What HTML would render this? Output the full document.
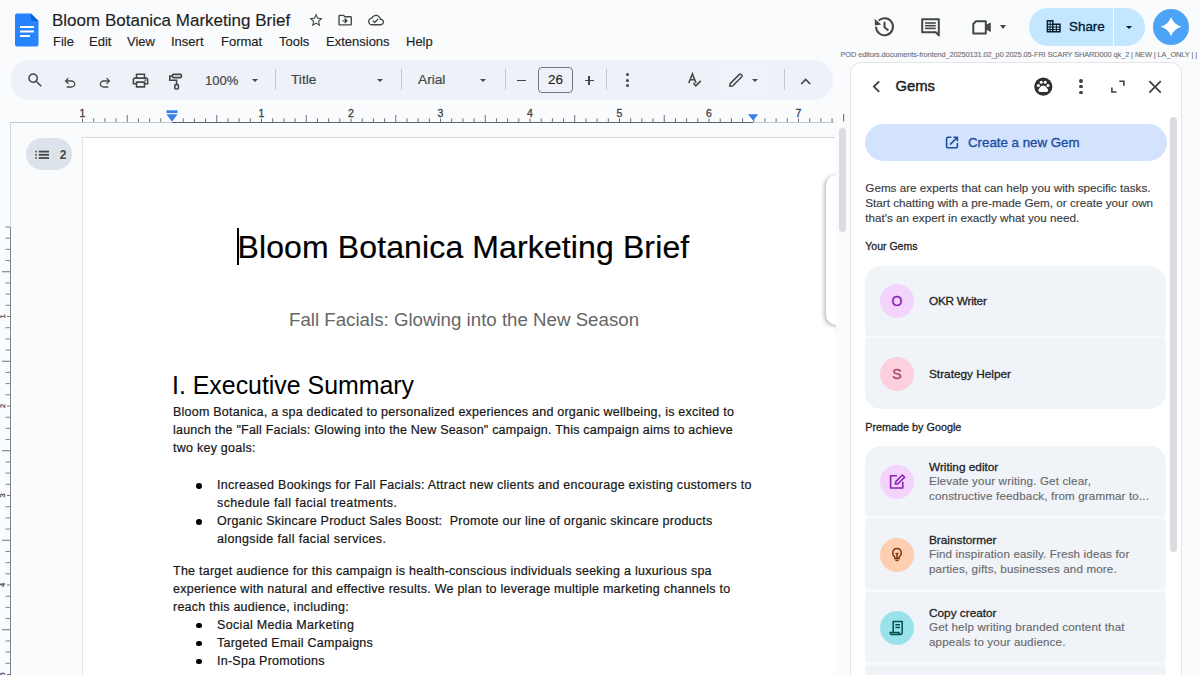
<!DOCTYPE html>
<html><head><meta charset="utf-8">
<style>
*{margin:0;padding:0;box-sizing:border-box}
html,body{width:1200px;height:675px;overflow:hidden;background:#f9fbfd;font-family:"Liberation Sans",sans-serif;color:#1f1f1f;position:relative}
.a{position:absolute;white-space:nowrap}
svg{position:absolute;overflow:visible}
#toolbar{position:absolute;left:10px;top:60px;width:823px;height:40px;border-radius:20px;background:#eef2f8}
.sep{position:absolute;width:1px;height:21px;top:69px;background:#c7c7c7}
.tri{position:absolute;width:0;height:0;border-left:4px solid transparent;border-right:4px solid transparent;border-top:4px solid #444746}
#page{position:absolute;left:82px;top:137px;width:753px;height:600px;background:#fff;border-left:1px solid #e3e3e3;border-top:1px solid #d9d9d9}
.body{font-size:12.5px;letter-spacing:0.25px;color:#161616;-webkit-text-stroke:0.2px #161616}
.bl{position:absolute;left:23px;width:5.8px;height:5.8px;border-radius:50%;background:#000}
#panel{position:absolute;left:849.5px;top:62px;width:332.5px;height:640px;background:#fff;border:1px solid #e3e5e8;border-radius:11px}
.card{position:absolute;left:865px;width:301px;background:#f0f3f8}
.av{position:absolute;left:880px;width:34px;height:34px;border-radius:50%;text-align:center;line-height:34px;font-size:14px;-webkit-text-stroke:0.35px currentColor}
.gt{position:absolute;left:929px;font-size:11.8px;color:#1f1f1f;white-space:nowrap;-webkit-text-stroke:0.3px #1f1f1f !important}
.gd{position:absolute;left:929px;font-size:11.6px;color:#686a6d;white-space:nowrap;line-height:15px;letter-spacing:0.15px;-webkit-text-stroke:0.15px #686a6d}
</style></head><body>

<!-- Docs logo -->
<svg style="left:15px;top:13px" width="24" height="34" viewBox="0 0 24 34">
  <path d="M2 0.5 H16 L23.5 8 V31.5 a2 2 0 0 1 -2 2 H2 a2 2 0 0 1 -2 -2 V2.5 a2 2 0 0 1 2 -2 Z" fill="#2684fc"/>
  <path d="M16 0.5 L23.5 8 H18 a2 2 0 0 1 -2 -2 Z" fill="#0066da"/>
  <rect x="5" y="13" width="14" height="2" fill="#fff"/>
  <rect x="5" y="17.5" width="14" height="2" fill="#fff"/>
  <rect x="5" y="22" width="10" height="2" fill="#fff"/>
</svg>

<div class="a" style="left:52px;top:11px;font-size:17px;color:#1f1f1f;-webkit-text-stroke:0.15px #1f1f1f">Bloom Botanica Marketing Brief</div>
<svg style="left:307.6px;top:12.2px" width="16.2" height="16.2" viewBox="0 0 24 24"><path fill="#444746" d="M22 9.24l-7.19-.62L12 2 9.19 8.63 2 9.24l5.46 4.73L5.82 21 12 17.27 18.18 21l-1.63-7.03L22 9.24zM12 15.4l-3.76 2.27 1-4.28-3.32-2.88 4.38-.38L12 6.1l1.71 4.04 4.38.38-3.32 2.88 1 4.28L12 15.4z"/></svg>
<svg style="left:337.2px;top:12.4px" width="16.3" height="16.3" viewBox="0 0 24 24"><path fill="#444746" d="M20 6h-8l-2-2H4c-1.1 0-1.99.9-1.99 2L2 18c0 1.1.9 2 2 2h16c1.1 0 2-.9 2-2V8c0-1.1-.9-2-2-2zm0 12H4V6h5.17l2 2H20v10zm-7.84-6H8v2h4.16l-1.59 1.59L11.99 17 16 13.01 11.99 9l-1.41 1.41L12.16 12z"/></svg>
<svg style="left:367.9px;top:12.4px" width="16.1" height="16.1" viewBox="0 0 24 24"><path fill="#444746" d="M19.35 10.04C18.670 6.59 15.64 4 12 4 9.11 4 6.6 5.64 5.35 8.04 2.34 8.36 0 10.91 0 14c0 3.31 2.69 6 6 6h13c2.76 0 5-2.24 5-5 0-2.64-2.05-4.78-4.650-4.96zM19 18H6c-2.21 0-4-1.79-4-4 0-2.05 1.53-3.76 3.56-3.97l1.07-.11.5-.95C8.08 7.14 9.94 6 12 6c2.62 0 4.88 1.86 5.39 4.43l.3 1.5 1.53.11c1.56.1 2.78 1.410 2.78 2.96 0 1.65-1.35 3-3 3zm-9-3.82l-2.09-2.09L6.5 13.5 10 17l6.01-6.01-1.41-1.41z"/></svg>

<div class="a" style="left:53px;top:34px;font-size:13px;color:#1f1f1f;-webkit-text-stroke:0.15px #1f1f1f">File</div>
<div class="a" style="left:89px;top:34px;font-size:13px;color:#1f1f1f;-webkit-text-stroke:0.15px #1f1f1f">Edit</div>
<div class="a" style="left:127px;top:34px;font-size:13px;color:#1f1f1f;-webkit-text-stroke:0.15px #1f1f1f">View</div>
<div class="a" style="left:171px;top:34px;font-size:13px;color:#1f1f1f;-webkit-text-stroke:0.15px #1f1f1f">Insert</div>
<div class="a" style="left:221px;top:34px;font-size:13px;color:#1f1f1f;-webkit-text-stroke:0.15px #1f1f1f">Format</div>
<div class="a" style="left:279px;top:34px;font-size:13px;color:#1f1f1f;-webkit-text-stroke:0.15px #1f1f1f">Tools</div>
<div class="a" style="left:326px;top:34px;font-size:13px;color:#1f1f1f;-webkit-text-stroke:0.15px #1f1f1f">Extensions</div>
<div class="a" style="left:406px;top:34px;font-size:13px;color:#1f1f1f;-webkit-text-stroke:0.15px #1f1f1f">Help</div>


<!-- header right -->
<svg style="left:870px;top:12px" width="30" height="30" viewBox="870 12 30 30"><g fill="none" stroke="#444746" stroke-width="2"><path d="M876 26.8 A8.5 8.5 0 1 0 878.6 20.6"/><path d="M884.5 21.8 V27.2 L888.4 30.4"/></g><path d="M874.6 18.8 L875 25.4 L881.2 24.6 Z" fill="#444746"/></svg>
<svg style="left:916px;top:12px" width="30" height="30" viewBox="916 12 30 30"><g fill="none" stroke="#444746" stroke-width="2" stroke-linejoin="round"><path d="M922.2 19.2 H938.8 V35.4 L935.8 32.2 H922.2 Z"/></g><g fill="#444746"><rect x="925" y="22.2" width="10.8" height="1.6"/><rect x="925" y="24.9" width="10.8" height="1.6"/><rect x="925" y="27.6" width="10.8" height="1.6"/></g></svg>
<svg style="left:968px;top:14px" width="28" height="26" viewBox="968 14 28 26"><g fill="none" stroke="#444746" stroke-width="2" stroke-linejoin="round"><path d="M976 21.2 H985.8 V33.4 H973.3 V24 Z"/></g><path d="M986 24.8 L990.8 22.4 V32 L986 29.6 Z" fill="#444746"/></svg>
<div class="tri" style="left:1000px;top:25px;border-left-width:3.6px;border-right-width:3.6px;border-top-width:4px"></div>

<div class="a" style="left:1029px;top:8px;width:115.5px;height:38px;border-radius:19px;background:#c2e7ff"></div>
<div class="a" style="left:1113.2px;top:8px;width:1px;height:38px;background:#f9fbfd"></div>
<svg style="left:1044px;top:17px" width="20" height="18" viewBox="1044 17 20 18"><g fill="none" stroke="#0a1f33" stroke-width="1.5"><path d="M1047.4 31.7 V20.7 H1052.8 V31.7 Z"/><path d="M1052.8 24.3 H1060 V31.7 H1052.8"/><path d="M1047.4 24.3 H1052.8 M1047.4 27.1 H1060 M1047.4 29.6 H1060 M1050.1 20.7 V31.7 M1056.4 24.3 V31.7" stroke-width="1"/></g></svg>
<div class="a" style="left:1069px;top:19px;font-size:13.4px;color:#001d35;-webkit-text-stroke:0.35px #001d35">Share</div>
<div class="tri" style="left:1125.7px;top:25.8px;border-left-width:3.7px;border-right-width:3.7px;border-top-width:3.6px;border-top-color:#001d35"></div>
<div class="a" style="left:1152.9px;top:8.5px;width:36.5px;height:36.5px;border-radius:50%;background:#4ca4f8"></div>
<svg style="left:1158px;top:15px" width="26" height="24" viewBox="1158 15 26 24"><path fill="#fff" d="M1171.1 17.1 Q1173.4 24.4 1181.3 26.7 Q1173.4 29 1171.1 36.3 Q1168.8 29 1160.9 26.7 Q1168.8 24.4 1171.1 17.1 Z"/></svg>

<!-- toolbar -->
<div id="toolbar"></div>
<svg style="left:26px;top:71px" width="18" height="18" viewBox="0 -960 960 960"><path fill="#444746" d="M784-120 532-372q-30 24-69 38t-83 14q-109 0-184.5-75.5T120-580q0-109 75.5-184.5T380-840q109 0 184.5 75.5T640-580q0 44-14 83t-38 69l252 252-56 56ZM380-400q75 0 127.5-52.5T560-580q0-75-52.5-127.5T380-760q-75 0-127.5 52.5T200-580q0 75 52.5 127.5T380-400Z"/></svg>
<svg style="left:61.5px;top:74.5px" width="16" height="16" viewBox="0 -960 960 960"><path fill="#444746" d="M280-200v-80h284q63 0 109.5-40T720-420q0-60-46.5-100T564-560H312l104 104-56 56-200-200 200-200 56 56-104 104h252q97 0 166.5 63T800-420q0 94-69.5 157T564-200H280Z"/></svg>
<svg style="left:97px;top:74.5px" width="16" height="16" viewBox="0 -960 960 960"><path fill="#444746" d="M396-200q-97 0-166.5-63T160-420q0-94 69.5-157T396-640h252L544-744l56-56 200 200-200 200-56-56 104-104H396q-63 0-109.5 40T240-420q0 60 46.5 100T396-280h284v80H396Z"/></svg>
<svg style="left:131px;top:71px" width="19" height="19" viewBox="0 -960 960 960"><path fill="#444746" d="M640-640v-120H320v120h-80v-200h480v200h-80Zm-480 80h640-640Zm560 100q17 0 28.5-11.5T760-500q0-17-11.5-28.5T720-540q-17 0-28.5 11.5T680-500q0 17 11.5 28.5T720-460Zm-80 260v-160H320v160h320Zm80 80H240v-160H80v-240q0-51 35-85.5t85-34.5h560q51 0 85.5 34.5T880-520v240H720v160Zm80-240v-160q0-17-11.5-28.5T760-560H200q-17 0-28.5 11.5T160-520v160h80v-80h480v80h80Z"/></svg>
<svg style="left:160px;top:70px" width="30" height="22" viewBox="160 70 30 22"><g fill="none" stroke="#444746" stroke-width="1.6"><rect x="172.4" y="74.4" width="9" height="3.2" rx="1"/><path d="M172.4 76 H169.8 V80.2 H176.6 V84.2"/><rect x="174.8" y="84.6" width="3.6" height="4.4" rx="1"/></g></svg>
<div class="a" style="left:205px;top:73px;font-size:13px;color:#444746;-webkit-text-stroke:0.2px #444746">100%</div>
<div class="tri" style="left:251.5px;top:78.5px;border-left-width:3.7px;border-right-width:3.7px;border-top-width:3.8px"></div>
<div class="sep" style="left:275px"></div>
<div class="a" style="left:291px;top:72px;font-size:13.7px;color:#444746;-webkit-text-stroke:0.2px #444746">Title</div>
<div class="tri" style="left:376.5px;top:78.5px;border-left-width:3.7px;border-right-width:3.7px;border-top-width:3.8px"></div>
<div class="sep" style="left:401px"></div>
<div class="a" style="left:418px;top:72px;font-size:13.7px;color:#444746;-webkit-text-stroke:0.2px #444746">Arial</div>
<div class="tri" style="left:480px;top:78.5px;border-left-width:3.7px;border-right-width:3.7px;border-top-width:3.8px"></div>
<div class="sep" style="left:505px"></div>
<div class="a" style="left:517px;top:79.5px;width:9px;height:1.6px;background:#444746"></div>
<div class="a" style="left:538px;top:67px;width:35px;height:25.5px;border:1px solid #747775;border-radius:4px;font-size:13.5px;color:#1f1f1f;text-align:center;line-height:23px;-webkit-text-stroke:0.15px #1f1f1f">26</div>
<div class="a" style="left:584.5px;top:79.7px;width:9px;height:1.6px;background:#444746"></div>
<div class="a" style="left:588.2px;top:76px;width:1.6px;height:9px;background:#444746"></div>
<div class="sep" style="left:606px"></div>
<div class="a" style="left:626px;top:73px;width:3px;height:3px;border-radius:50%;background:#444746"></div>
<div class="a" style="left:626px;top:78.5px;width:3px;height:3px;border-radius:50%;background:#444746"></div>
<div class="a" style="left:626px;top:84px;width:3px;height:3px;border-radius:50%;background:#444746"></div>
<svg style="left:680px;top:70px" width="30" height="22" viewBox="680 70 30 22"><g fill="none" stroke="#444746" stroke-width="1.6"><path d="M688.8 83 L692.4 73.9 L696 83 M690 79.8 H694.8"/><path d="M693.3 83 L695.8 85.9 L700.8 80.9"/></g></svg>
<div class="a" style="left:720px;top:60px;width:48px;height:40px;background:#f0f2fa"></div>
<svg style="left:726px;top:70px" width="20" height="20" viewBox="726 70 20 20"><g fill="none" stroke="#444746" stroke-width="1.5" stroke-linejoin="round"><path d="M729.7 86.2 L730.2 83.6 L739.4 74.4 Q740.2 73.6 741 74.4 L741.8 75.2 Q742.6 76 741.8 76.8 L732.6 86 Z"/></g></svg>
<div class="tri" style="left:751.5px;top:78.5px;border-left-width:3.7px;border-right-width:3.7px;border-top-width:3.8px"></div>
<div class="sep" style="left:784px"></div>
<svg style="left:798px;top:74px" width="16" height="12" viewBox="798 74 16 12"><path d="M801.2 84 L805.7 79.5 L810.2 84" fill="none" stroke="#444746" stroke-width="1.7"/></svg>


<!-- ruler -->
<svg style="left:0;top:100px" width="860" height="26" viewBox="0 100 860 26">
<rect x="10" y="122" width="824" height="1" fill="#c7cacc"/>
<rect x="172" y="122" width="581" height="1" fill="#5f6368"/>
<rect x="82.00" y="118.5" width="1" height="3.5" fill="#6f7377"/>
<text x="82.50" y="116.5" font-size="10.5" fill="#3c4043" stroke="#3c4043" stroke-width="0.3" text-anchor="middle" font-family="Liberation Sans">1</text>
<rect x="93.19" y="118.3" width="1" height="3.7" fill="#6f7377"/>
<rect x="104.38" y="118.3" width="1" height="3.7" fill="#6f7377"/>
<rect x="115.56" y="118.3" width="1" height="3.7" fill="#6f7377"/>
<rect x="126.75" y="115" width="1" height="7" fill="#6f7377"/>
<rect x="137.94" y="118.3" width="1" height="3.7" fill="#6f7377"/>
<rect x="149.12" y="118.3" width="1" height="3.7" fill="#6f7377"/>
<rect x="160.31" y="118.3" width="1" height="3.7" fill="#6f7377"/>
<rect x="182.69" y="118.3" width="1" height="3.7" fill="#6f7377"/>
<rect x="193.88" y="118.3" width="1" height="3.7" fill="#6f7377"/>
<rect x="205.06" y="118.3" width="1" height="3.7" fill="#6f7377"/>
<rect x="216.25" y="115" width="1" height="7" fill="#6f7377"/>
<rect x="227.44" y="118.3" width="1" height="3.7" fill="#6f7377"/>
<rect x="238.62" y="118.3" width="1" height="3.7" fill="#6f7377"/>
<rect x="249.81" y="118.3" width="1" height="3.7" fill="#6f7377"/>
<rect x="261.00" y="118.5" width="1" height="3.5" fill="#6f7377"/>
<text x="261.50" y="116.5" font-size="10.5" fill="#3c4043" stroke="#3c4043" stroke-width="0.3" text-anchor="middle" font-family="Liberation Sans">1</text>
<rect x="272.19" y="118.3" width="1" height="3.7" fill="#6f7377"/>
<rect x="283.38" y="118.3" width="1" height="3.7" fill="#6f7377"/>
<rect x="294.56" y="118.3" width="1" height="3.7" fill="#6f7377"/>
<rect x="305.75" y="115" width="1" height="7" fill="#6f7377"/>
<rect x="316.94" y="118.3" width="1" height="3.7" fill="#6f7377"/>
<rect x="328.12" y="118.3" width="1" height="3.7" fill="#6f7377"/>
<rect x="339.31" y="118.3" width="1" height="3.7" fill="#6f7377"/>
<rect x="350.50" y="118.5" width="1" height="3.5" fill="#6f7377"/>
<text x="351.00" y="116.5" font-size="10.5" fill="#3c4043" stroke="#3c4043" stroke-width="0.3" text-anchor="middle" font-family="Liberation Sans">2</text>
<rect x="361.69" y="118.3" width="1" height="3.7" fill="#6f7377"/>
<rect x="372.88" y="118.3" width="1" height="3.7" fill="#6f7377"/>
<rect x="384.06" y="118.3" width="1" height="3.7" fill="#6f7377"/>
<rect x="395.25" y="115" width="1" height="7" fill="#6f7377"/>
<rect x="406.44" y="118.3" width="1" height="3.7" fill="#6f7377"/>
<rect x="417.62" y="118.3" width="1" height="3.7" fill="#6f7377"/>
<rect x="428.81" y="118.3" width="1" height="3.7" fill="#6f7377"/>
<rect x="440.00" y="118.5" width="1" height="3.5" fill="#6f7377"/>
<text x="440.50" y="116.5" font-size="10.5" fill="#3c4043" stroke="#3c4043" stroke-width="0.3" text-anchor="middle" font-family="Liberation Sans">3</text>
<rect x="451.19" y="118.3" width="1" height="3.7" fill="#6f7377"/>
<rect x="462.38" y="118.3" width="1" height="3.7" fill="#6f7377"/>
<rect x="473.56" y="118.3" width="1" height="3.7" fill="#6f7377"/>
<rect x="484.75" y="115" width="1" height="7" fill="#6f7377"/>
<rect x="495.94" y="118.3" width="1" height="3.7" fill="#6f7377"/>
<rect x="507.12" y="118.3" width="1" height="3.7" fill="#6f7377"/>
<rect x="518.31" y="118.3" width="1" height="3.7" fill="#6f7377"/>
<rect x="529.50" y="118.5" width="1" height="3.5" fill="#6f7377"/>
<text x="530.00" y="116.5" font-size="10.5" fill="#3c4043" stroke="#3c4043" stroke-width="0.3" text-anchor="middle" font-family="Liberation Sans">4</text>
<rect x="540.69" y="118.3" width="1" height="3.7" fill="#6f7377"/>
<rect x="551.88" y="118.3" width="1" height="3.7" fill="#6f7377"/>
<rect x="563.06" y="118.3" width="1" height="3.7" fill="#6f7377"/>
<rect x="574.25" y="115" width="1" height="7" fill="#6f7377"/>
<rect x="585.44" y="118.3" width="1" height="3.7" fill="#6f7377"/>
<rect x="596.62" y="118.3" width="1" height="3.7" fill="#6f7377"/>
<rect x="607.81" y="118.3" width="1" height="3.7" fill="#6f7377"/>
<rect x="619.00" y="118.5" width="1" height="3.5" fill="#6f7377"/>
<text x="619.50" y="116.5" font-size="10.5" fill="#3c4043" stroke="#3c4043" stroke-width="0.3" text-anchor="middle" font-family="Liberation Sans">5</text>
<rect x="630.19" y="118.3" width="1" height="3.7" fill="#6f7377"/>
<rect x="641.38" y="118.3" width="1" height="3.7" fill="#6f7377"/>
<rect x="652.56" y="118.3" width="1" height="3.7" fill="#6f7377"/>
<rect x="663.75" y="115" width="1" height="7" fill="#6f7377"/>
<rect x="674.94" y="118.3" width="1" height="3.7" fill="#6f7377"/>
<rect x="686.12" y="118.3" width="1" height="3.7" fill="#6f7377"/>
<rect x="697.31" y="118.3" width="1" height="3.7" fill="#6f7377"/>
<rect x="708.50" y="118.5" width="1" height="3.5" fill="#6f7377"/>
<text x="709.00" y="116.5" font-size="10.5" fill="#3c4043" stroke="#3c4043" stroke-width="0.3" text-anchor="middle" font-family="Liberation Sans">6</text>
<rect x="719.69" y="118.3" width="1" height="3.7" fill="#6f7377"/>
<rect x="730.88" y="118.3" width="1" height="3.7" fill="#6f7377"/>
<rect x="742.06" y="118.3" width="1" height="3.7" fill="#6f7377"/>
<rect x="753.25" y="115" width="1" height="7" fill="#6f7377"/>
<rect x="764.44" y="118.3" width="1" height="3.7" fill="#6f7377"/>
<rect x="775.62" y="118.3" width="1" height="3.7" fill="#6f7377"/>
<rect x="786.81" y="118.3" width="1" height="3.7" fill="#6f7377"/>
<rect x="798.00" y="118.5" width="1" height="3.5" fill="#6f7377"/>
<text x="798.50" y="116.5" font-size="10.5" fill="#3c4043" stroke="#3c4043" stroke-width="0.3" text-anchor="middle" font-family="Liberation Sans">7</text>
<rect x="809.19" y="118.3" width="1" height="3.7" fill="#6f7377"/>
<rect x="820.38" y="118.3" width="1" height="3.7" fill="#6f7377"/>
<rect x="831.56" y="118.3" width="1" height="3.7" fill="#6f7377"/>
<rect x="843" y="114" width="1.2" height="7.5" fill="#747775"/>
<rect x="166.5" y="110.3" width="11" height="2.8" fill="#3a7fe9"/>
<path d="M166.5 114.2 H177.5 L172 121.8 Z" fill="#3a7fe9"/>
<path d="M748 114.2 H758.2 L753.1 120.5 Z" fill="#3a7fe9"/>
</svg>
<svg style="left:0;top:122px" width="12" height="553" viewBox="0 122 12 553">
<rect x="10" y="122" width="1" height="105" fill="#d5d8db"/>
<rect x="10" y="227" width="1" height="460" fill="#80868b"/>
<rect x="5.5" y="226.50" width="4.5" height="1" fill="#80868b"/>
<rect x="5.5" y="237.69" width="4.5" height="1" fill="#80868b"/>
<rect x="5.5" y="248.88" width="4.5" height="1" fill="#80868b"/>
<rect x="5.5" y="260.06" width="4.5" height="1" fill="#80868b"/>
<rect x="2" y="271.25" width="8" height="1" fill="#6f7377"/>
<rect x="5.5" y="282.44" width="4.5" height="1" fill="#80868b"/>
<rect x="5.5" y="293.62" width="4.5" height="1" fill="#80868b"/>
<rect x="5.5" y="304.81" width="4.5" height="1" fill="#80868b"/>
<rect x="7" y="316.00" width="3" height="1" fill="#6f7377"/>
<text transform="translate(2.2 316.50) rotate(-90)" font-size="7.5" fill="#3c4043" stroke="#3c4043" stroke-width="0.2" text-anchor="middle" font-family="Liberation Sans" y="2.6">1</text>
<rect x="5.5" y="327.19" width="4.5" height="1" fill="#80868b"/>
<rect x="5.5" y="338.38" width="4.5" height="1" fill="#80868b"/>
<rect x="5.5" y="349.56" width="4.5" height="1" fill="#80868b"/>
<rect x="2" y="360.75" width="8" height="1" fill="#6f7377"/>
<rect x="5.5" y="371.94" width="4.5" height="1" fill="#80868b"/>
<rect x="5.5" y="383.12" width="4.5" height="1" fill="#80868b"/>
<rect x="5.5" y="394.31" width="4.5" height="1" fill="#80868b"/>
<rect x="7" y="405.50" width="3" height="1" fill="#6f7377"/>
<text transform="translate(2.2 406.00) rotate(-90)" font-size="7.5" fill="#3c4043" stroke="#3c4043" stroke-width="0.2" text-anchor="middle" font-family="Liberation Sans" y="2.6">2</text>
<rect x="5.5" y="416.69" width="4.5" height="1" fill="#80868b"/>
<rect x="5.5" y="427.88" width="4.5" height="1" fill="#80868b"/>
<rect x="5.5" y="439.06" width="4.5" height="1" fill="#80868b"/>
<rect x="2" y="450.25" width="8" height="1" fill="#6f7377"/>
<rect x="5.5" y="461.44" width="4.5" height="1" fill="#80868b"/>
<rect x="5.5" y="472.62" width="4.5" height="1" fill="#80868b"/>
<rect x="5.5" y="483.81" width="4.5" height="1" fill="#80868b"/>
<rect x="7" y="495.00" width="3" height="1" fill="#6f7377"/>
<text transform="translate(2.2 495.50) rotate(-90)" font-size="7.5" fill="#3c4043" stroke="#3c4043" stroke-width="0.2" text-anchor="middle" font-family="Liberation Sans" y="2.6">3</text>
<rect x="5.5" y="506.19" width="4.5" height="1" fill="#80868b"/>
<rect x="5.5" y="517.38" width="4.5" height="1" fill="#80868b"/>
<rect x="5.5" y="528.56" width="4.5" height="1" fill="#80868b"/>
<rect x="2" y="539.75" width="8" height="1" fill="#6f7377"/>
<rect x="5.5" y="550.94" width="4.5" height="1" fill="#80868b"/>
<rect x="5.5" y="562.12" width="4.5" height="1" fill="#80868b"/>
<rect x="5.5" y="573.31" width="4.5" height="1" fill="#80868b"/>
<rect x="7" y="584.50" width="3" height="1" fill="#6f7377"/>
<text transform="translate(2.2 585.00) rotate(-90)" font-size="7.5" fill="#3c4043" stroke="#3c4043" stroke-width="0.2" text-anchor="middle" font-family="Liberation Sans" y="2.6">4</text>
<rect x="5.5" y="595.69" width="4.5" height="1" fill="#80868b"/>
<rect x="5.5" y="606.88" width="4.5" height="1" fill="#80868b"/>
<rect x="5.5" y="618.06" width="4.5" height="1" fill="#80868b"/>
<rect x="2" y="629.25" width="8" height="1" fill="#6f7377"/>
<rect x="5.5" y="640.44" width="4.5" height="1" fill="#80868b"/>
<rect x="5.5" y="651.62" width="4.5" height="1" fill="#80868b"/>
<rect x="5.5" y="662.81" width="4.5" height="1" fill="#80868b"/>
<rect x="7" y="674.00" width="3" height="1" fill="#6f7377"/>
<text transform="translate(2.2 674.50) rotate(-90)" font-size="7.5" fill="#3c4043" stroke="#3c4043" stroke-width="0.2" text-anchor="middle" font-family="Liberation Sans" y="2.6">5</text>
</svg>


<!-- page -->
<div id="page"></div>


<!-- doc content -->
<div class="a" style="left:237px;top:227.5px;width:1.5px;height:37px;background:#000"></div>
<div class="a" style="left:237.5px;top:229px;font-size:32px;letter-spacing:0.12px;color:#000;-webkit-text-stroke:0.2px #000">Bloom Botanica Marketing Brief</div>
<div class="a" style="left:289px;top:308.5px;font-size:18.7px;color:#666">Fall Facials: Glowing into the New Season</div>
<div class="a" style="left:172px;top:370.7px;font-size:24.9px;color:#000">I. Executive Summary</div>
<div class="a body" style="left:173px;top:403px;line-height:18px"><span style="letter-spacing:0.228px">Bloom Botanica, a spa dedicated to personalized experiences and organic wellbeing, is excited to</span><br><span style="letter-spacing:0.209px">launch the "Fall Facials: Glowing into the New Season" campaign. This campaign aims to achieve</span><br>two key goals:</div>
<div class="a body" style="left:173px;top:476px;line-height:18px">
<div class="bl" style="top:6.8px"></div><div style="position:absolute;left:44px;top:0"><span style="letter-spacing:0.268px">Increased Bookings for Fall Facials: Attract new clients and encourage existing customers to</span></div>
<div style="position:absolute;left:44px;top:18px"><span style="letter-spacing:0.38px">schedule fall facial treatments.</span></div>
<div class="bl" style="top:42.8px"></div><div style="position:absolute;left:44px;top:36px">Organic Skincare Product Sales Boost:&nbsp; Promote our line of organic skincare products</div>
<div style="position:absolute;left:44px;top:54px"><span style="letter-spacing:0.35px">alongside fall facial services.</span></div>
</div>
<div class="a body" style="left:173px;top:562px;line-height:18px">The target audience for this campaign is health-conscious individuals seeking a luxurious spa<br>experience with natural and effective results. We plan to leverage multiple marketing channels to<br>reach this audience, including:</div>
<div class="a body" style="left:173px;top:615.8px;line-height:18px">
<div class="bl" style="top:6.8px"></div><div style="position:absolute;left:44px;top:0"><span style="letter-spacing:0.33px">Social Media Marketing</span></div>
<div class="bl" style="top:24.8px"></div><div style="position:absolute;left:44px;top:18px">Targeted Email Campaigns</div>
<div class="bl" style="top:42.8px"></div><div style="position:absolute;left:44px;top:36px">In-Spa Promotions</div>
</div>


<!-- outline pill -->
<div class="a" style="left:25.5px;top:138px;width:46px;height:32px;border-radius:16px;background:#dde3ea"></div>
<svg style="left:30px;top:145px" width="40" height="20" viewBox="30 145 40 20"><g fill="#444746"><rect x="35.3" y="150.8" width="1.6" height="1.6"/><rect x="35.3" y="154" width="1.6" height="1.6"/><rect x="35.3" y="157.2" width="1.6" height="1.6"/><rect x="38.8" y="150.7" width="10.2" height="1.8"/><rect x="38.8" y="153.9" width="10.2" height="1.8"/><rect x="38.8" y="157.1" width="10.2" height="1.8"/></g></svg>
<div class="a" style="left:59.8px;top:147.8px;font-size:12px;font-weight:bold;color:#444746">2</div>
<!-- side scroller element -->
<div class="a" style="left:826px;top:175px;width:20px;height:150px;border-radius:10px 0 0 10px;background:#fff;box-shadow:-1.5px 1px 4px rgba(0,0,0,0.3)"></div>
<div class="a" style="left:836px;top:124px;width:14px;height:560px;background:#f9fbfd"></div>
<div class="a" style="left:838.5px;top:127.5px;width:7px;height:104px;border-radius:3.5px;background:#dadce0"></div>

<!-- panel -->
<div id="panel"></div>
<div class="a" style="left:840.5px;top:50px;font-size:7.4px;color:#6b6e72;letter-spacing:-0.1px;-webkit-text-stroke:0.1px #6b6e72">POD editors.documents-frontend_20250131.02_p0 2025.05-FRI SCARY SHARD000 qk_2 | NEW | LA_ONLY | |</div>
<svg style="left:868px;top:78px" width="16" height="18" viewBox="868 78 16 18"><path d="M879.2 81.3 L873.9 86.6 L879.2 91.9" fill="none" stroke="#3c4043" stroke-width="1.9"/></svg>
<div class="a" style="left:895.5px;top:78.4px;font-size:14.8px;color:#1f1f1f;-webkit-text-stroke:0.45px #1f1f1f">Gems</div>
<svg style="left:1030px;top:74px" width="28" height="26" viewBox="1030 74 28 26"><circle cx="1043.3" cy="86.6" r="9.1" fill="#2d2f31"/><g fill="#fff"><circle cx="1041.2" cy="82.3" r="1.5"/><circle cx="1045.2" cy="82.3" r="1.5"/><circle cx="1038.4" cy="85.4" r="1.5"/><circle cx="1048" cy="85.4" r="1.5"/><path d="M1043.2 85.4 C1041.2 85.4 1038.4 88.6 1038.4 90.4 C1038.4 92.2 1040.6 91.9 1043.2 91.9 C1045.8 91.9 1048.2 92.2 1048.2 90.4 C1048.2 88.6 1045.2 85.4 1043.2 85.4 Z"/></g></svg>
<div class="a" style="left:1078.8px;top:79px;width:3.8px;height:3.8px;border-radius:50%;background:#3c4043"></div>
<div class="a" style="left:1078.8px;top:84.6px;width:3.8px;height:3.8px;border-radius:50%;background:#3c4043"></div>
<div class="a" style="left:1078.8px;top:90.6px;width:3.8px;height:3.8px;border-radius:50%;background:#3c4043"></div>
<svg style="left:1108px;top:77px" width="20" height="20" viewBox="1108 77 20 20"><path d="M1119.3 81.2 H1123.9 V85.8 M1116.5 92 H1111.9 V87.4" fill="none" stroke="#3c4043" stroke-width="1.6"/></svg>
<svg style="left:1145px;top:77px" width="20" height="20" viewBox="1145 77 20 20"><path d="M1149.3 81.2 L1160.8 92.7 M1160.8 81.2 L1149.3 92.7" fill="none" stroke="#3c4043" stroke-width="1.7"/></svg>

<div class="a" style="left:865px;top:124px;width:301.5px;height:37px;border-radius:18.5px;background:#d3e3fd"></div>
<svg style="left:943px;top:134px" width="18" height="17" viewBox="943 134 18 17"><g fill="none" stroke="#1b4ea0" stroke-width="1.6" stroke-linejoin="round"><path d="M951.4 137.2 H948 Q946.6 137.2 946.6 138.6 V146.4 Q946.6 147.8 948 147.8 H956 Q957.4 147.8 957.4 146.4 V143"/><path d="M953.4 137.2 H957.4 V141.2 M957.2 137.4 L950 144.6"/></g></svg>
<div class="a" style="left:968px;top:134.8px;font-size:13.3px;color:#1b4ea0;-webkit-text-stroke:0.35px #1b4ea0">Create a new Gem</div>

<div class="a" style="left:865.3px;top:179.5px;font-size:11.7px;line-height:15px;color:#3a3c3f;-webkit-text-stroke:0.15px #3a3c3f">Gems are experts that can help you with specific tasks.<br>Start chatting with a pre-made Gem, or create your own<br>that's an expert in exactly what you need.</div>

<div class="a" style="left:865.3px;top:240px;font-size:10.5px;color:#1f1f1f;-webkit-text-stroke:0.3px #1f1f1f">Your Gems</div>

<div class="a" style="left:866px;top:330px;width:299px;height:12px;background:#f7f9fc"></div>
<div class="card" style="top:266px;height:70px;border-radius:16px 16px 4px 4px"></div>
<div class="card" style="top:338px;height:71px;border-radius:4px 4px 16px 16px"></div>
<div class="av" style="top:284.3px;background:#f4d4fd;color:#8a22b5">O</div>
<div class="gt" style="top:294.3px;letter-spacing:-0.25px;-webkit-text-stroke:0.2px #1f1f1f">OKR Writer</div>
<div class="av" style="top:356.8px;background:#fcd0dd;color:#a8456a">S</div>
<div class="gt" style="top:366.8px;-webkit-text-stroke:0.2px #1f1f1f">Strategy Helper</div>

<div class="a" style="left:865.3px;top:420.5px;font-size:10.8px;color:#1f1f1f;-webkit-text-stroke:0.3px #1f1f1f">Premade by Google</div>

<div class="a" style="left:866px;top:510px;width:299px;height:160px;background:#f7f9fc"></div>
<div class="card" style="top:446px;height:70px;border-radius:16px 16px 4px 4px"></div>
<div class="card" style="top:519px;height:70px;border-radius:4px"></div>
<div class="card" style="top:592px;height:69.5px;border-radius:4px"></div>
<div class="card" style="top:664.5px;height:40px;border-radius:4px"></div>

<div class="av" style="top:465px;background:#f4d4fd"></div>
<svg style="left:886px;top:471px" width="22" height="22" viewBox="886 471 22 22"><g fill="none" stroke="#8a22b5" stroke-width="1.6" stroke-linejoin="round"><path d="M897 475.8 H890.6 V488 H902.8 V481.8"/><path d="M895.4 484.2 L895.8 481.6 L902.4 475 L904.6 477.2 L898 483.8 Z"/></g></svg>
<div class="gt" style="top:459.5px;-webkit-text-stroke:0.2px #1f1f1f">Writing editor</div>
<div class="gd" style="top:473px">Elevate your writing. Get clear,<br>constructive feedback, from grammar to...</div>

<div class="av" style="top:538px;background:#ffcdb0"></div>
<svg style="left:886px;top:544px" width="22" height="22" viewBox="886 544 22 22"><g fill="none" stroke="#7a3a10" stroke-width="1.5"><path d="M894.8 556.8 C893 555.6 892.6 553.8 892.8 552.4 C893.2 549.8 895.2 548.6 897 548.6 C898.8 548.6 900.8 549.8 901.2 552.4 C901.4 553.8 901 555.6 899.2 556.8 V558.4 H894.8 Z"/><path d="M895.4 560.4 H898.6"/><path d="M897 558.2 V553.8 M895.6 553 L897 554.2 L898.4 553"/></g></svg>
<div class="gt" style="top:532.5px;-webkit-text-stroke:0.2px #1f1f1f">Brainstormer</div>
<div class="gd" style="top:546px">Find inspiration easily. Fresh ideas for<br>parties, gifts, businesses and more.</div>

<div class="av" style="top:611px;background:#9ae2ea"></div>
<svg style="left:886px;top:617px" width="22" height="22" viewBox="886 617 22 22"><g fill="none" stroke="#00504d" stroke-width="1.5" stroke-linejoin="round"><path d="M893.2 632.4 V621.6 H902.2 V632.4 C902.2 633.6 901.4 634.4 900.2 634.4 H891.6 C890.6 634.4 890.2 633.6 890.2 632.4 H899 C899 633.4 899.6 634.4 900.4 634.4"/><path d="M895.4 624.8 H900 M895.4 627.6 H900"/></g></svg>
<div class="gt" style="top:605.5px;-webkit-text-stroke:0.2px #1f1f1f">Copy creator</div>
<div class="gd" style="top:619px">Get help writing branded content that<br>appeals to your audience.</div>

<div class="a" style="left:1170px;top:117px;width:7px;height:434.5px;border-radius:3.5px;background:#dadce0"></div>


</body></html>
